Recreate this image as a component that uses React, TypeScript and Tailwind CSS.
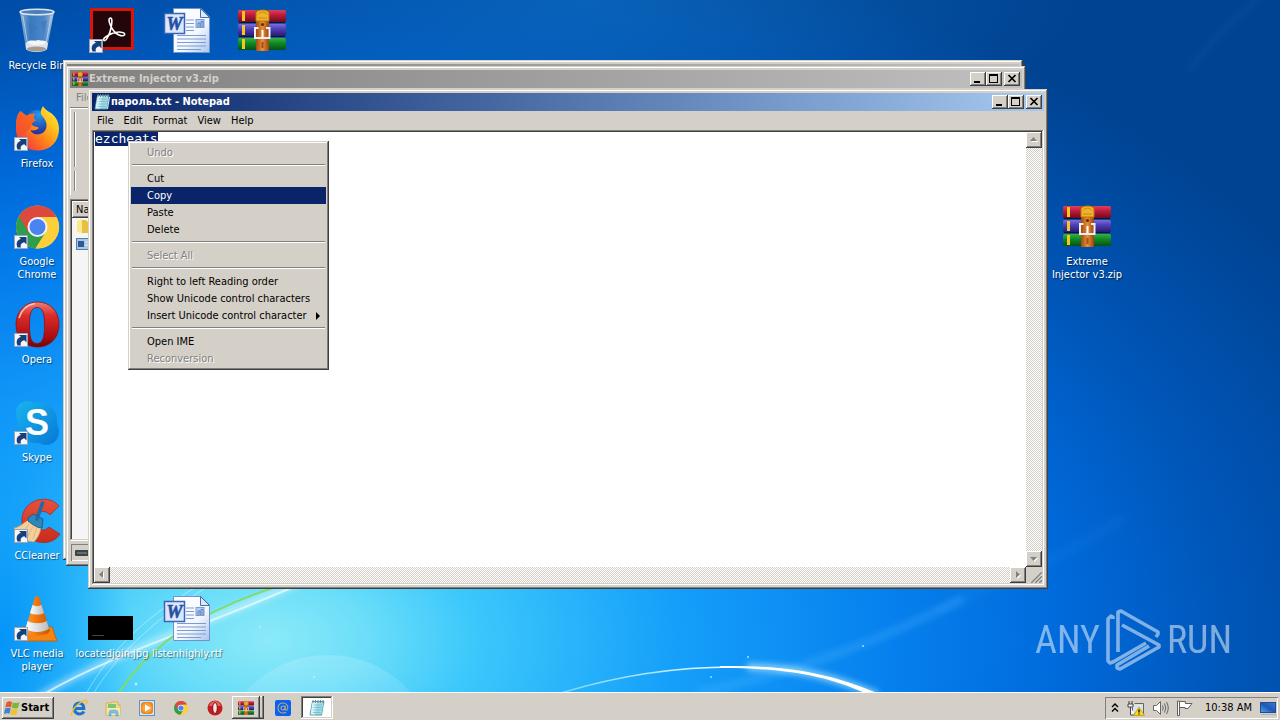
import React, { useEffect, useRef } from 'react'

const raised =
  'bg-[#d4d0c8] shadow-[inset_-1px_-1px_#404040,inset_1px_1px_#fff,inset_-2px_-2px_#808080]'
const sunken =
  'shadow-[inset_-1px_-1px_#fff,inset_1px_1px_#808080,inset_-2px_-2px_#d4d0c8,inset_2px_2px_#404040]'
const frame =
  'bg-[#d4d0c8] p-1 shadow-[inset_-1px_-1px_#404040,inset_1px_1px_#d4d0c8,inset_-2px_-2px_#808080,inset_2px_2px_#fff]'
const track = 'bg-[repeating-conic-gradient(#fff_0_25%,#d4d0c8_0_50%)] bg-[length:2px_2px]'

/* ---------- Wallpaper ---------- */

const Wallpaper = () => (
  <svg
    className="absolute inset-0 h-full w-full"
    viewBox="0 0 1280 692"
    preserveAspectRatio="none"
    aria-hidden="true"
  >
    <defs>
      <radialGradient id="glow" gradientUnits="userSpaceOnUse" cx="0" cy="0" r="1" gradientTransform="translate(270 640) scale(1200 740)">
        <stop offset="0" stopColor="#8ceaf8" />
        <stop offset="0.08" stopColor="#6cdef9" />
        <stop offset="0.17" stopColor="#3cc8fb" />
        <stop offset="0.34" stopColor="#159ffa" />
        <stop offset="0.52" stopColor="#0680ee" />
        <stop offset="0.66" stopColor="#006adb" />
        <stop offset="0.8" stopColor="#0056b8" />
        <stop offset="0.93" stopColor="#00499f" />
        <stop offset="1" stopColor="#004392" />
      </radialGradient>
      <radialGradient id="top" gradientUnits="userSpaceOnUse" cx="0" cy="0" r="1" gradientTransform="translate(600 0) scale(480 160)">
        <stop offset="0" stopColor="#1278cc" stopOpacity="0.5" />
        <stop offset="1" stopColor="#1278cc" stopOpacity="0" />
      </radialGradient>
      <radialGradient id="left" gradientUnits="userSpaceOnUse" cx="0" cy="0" r="1" gradientTransform="translate(0 640) scale(130 260)">
        <stop offset="0" stopColor="#0090f8" stopOpacity="0.9" />
        <stop offset="1" stopColor="#0090f8" stopOpacity="0" />
      </radialGradient>
      <linearGradient id="arc" gradientUnits="userSpaceOnUse" x1="561" y1="0" x2="875" y2="0">
        <stop offset="0" stopColor="#9fe4ff" stopOpacity="0.7" />
        <stop offset="0.6" stopColor="#fff" />
        <stop offset="1" stopColor="#fff" />
      </linearGradient>
      <linearGradient id="bubble" x1="0" x2="0" y1="0" y2="1">
        <stop offset="0" stopColor="#fff" stopOpacity="0.16" />
        <stop offset="0.35" stopColor="#fff" stopOpacity="0.04" />
      </linearGradient>
      <filter id="soft" x="-20%" y="-50%" width="140%" height="200%">
        <feGaussianBlur stdDeviation="3" />
      </filter>
    </defs>
    <rect width="1280" height="692" fill="url(#glow)" />
    <rect width="1280" height="200" fill="url(#top)" />
    <rect y="380" width="130" height="312" fill="url(#left)" />
    <circle cx="328" cy="765" r="110" fill="url(#bubble)" />
    <g fill="none" strokeLinecap="round">
      <path d="M40 696C110 655 200 625 300 582" stroke="#fff" strokeOpacity="0.45" strokeWidth="7" filter="url(#soft)" />
      <path d="M44 694C110 655 200 628 300 584" stroke="#e8fbff" strokeOpacity="0.75" strokeWidth="2" />
      <path d="M86 694C110 650 150 612 205 582" stroke="#fff" strokeOpacity="0.4" />
      <path d="M93 694C120 650 160 615 215 582" stroke="#fff" strokeOpacity="0.4" />
      <path d="M118 694C150 645 200 610 285 584" stroke="#7fdc6a" strokeWidth="2" />
      <path d="M700 692C800 672 880 640 960 600" stroke="#5cc0ff" strokeOpacity="0.25" strokeWidth="8" filter="url(#soft)" />
      <path d="M940 610C1000 580 1060 560 1120 520" stroke="#5cc0ff" strokeOpacity="0.06" strokeWidth="12" filter="url(#soft)" />
      <path d="M1190 70C1210 40 1240 15 1262 -5" stroke="#5cc0ff" strokeOpacity="0.15" strokeWidth="2" filter="url(#soft)" />
      <path d="M750 667C800 668 835 678 875 694" stroke="#bff0ff" strokeOpacity="0.7" strokeWidth="7" filter="url(#soft)" />
      <path d="M561 693C620 675 680 667 733 667" stroke="url(#arc)" strokeWidth="1.5" />
    </g>
    <path d="M720 666C790 665 832 674 879 694H867C830 677 790 668 720 668Z" fill="#fff" />
    <g fill="#c8f4ff" fillOpacity="0.8">
      <circle cx="136" cy="684" r="1.5" />
      <circle cx="260" cy="627" r="1" />
      <circle cx="748" cy="657" r="1" />
      <circle cx="863" cy="646" r="1" />
      <circle cx="314" cy="677" r="1" />
      <circle cx="711" cy="677" r="1" />
    </g>
  </svg>
)

/* ---------- Desktop icons (48px) ---------- */

const Shortcut = () => (
  <g>
    <rect x="1.5" y="33.5" width="13" height="13" fill="#f4f6fa" stroke="#9aa4b4" />
    <path d="M4.500 45.500C2.500 41 4.500 37.500 8 37L6 35H13.500V42.500L11.300 40.200C8.500 41 7 42.500 8 45.500Z" fill="#163f7c" />
  </g>
)

const RecycleBin = () => (
  <svg viewBox="0 0 48 48" className="h-12 w-12">
    <defs>
      <linearGradient id="bin" x1="0" x2="1">
        <stop offset="0" stopColor="#b4c9de" stopOpacity="0.85" />
        <stop offset="0.3" stopColor="#5f93cc" stopOpacity="0.6" />
        <stop offset="0.7" stopColor="#7fa9d6" stopOpacity="0.6" />
        <stop offset="1" stopColor="#c3d4e4" stopOpacity="0.9" />
      </linearGradient>
    </defs>
    <path d="M7 6L13 43C15 47 32 47 34 43L41 6Z" fill="url(#bin)" />
    <path d="M12.500 37C18 34 29 34 35 37L34 43C31 47 16 47 13 43Z" fill="#dde2e6" />
    <ellipse cx="23.500" cy="43" rx="9.500" ry="2.500" fill="#a59c92" />
    <path d="M14 36C18 33 22 36 25 34C29 35 32 34 34 36C30 40 18 41 14 36Z" fill="#f3f5f6" />
    <path d="M14 16L24 21L19 28ZM28 16L34 14L31 28Z" fill="#3a76bb" fillOpacity="0.6" />
    <ellipse cx="24" cy="6" rx="17" ry="2.800" fill="#4b7fb8" stroke="#dbe5ee" strokeWidth="1.500" />
    <path d="M10 10L15 41M38 10L32.500 41" stroke="#dfe9f2" strokeOpacity="0.6" />
  </svg>
)

const Acrobat = () => (
  <svg viewBox="0 0 48 48" className="h-12 w-12">
    <rect x="2" y="2" width="44" height="42" fill="#d9160c" />
    <rect x="5" y="5" width="38" height="36" fill="#22060a" />
    <path
      d="M22.500 12C19.500 12 21.500 19 25 24C28 28.500 34 31 36.500 29C38 26 30 25 24 27.500C19 29.500 14 33 16 34.500C18.500 35.500 22 27 23 22C24 17 24.500 12 22.500 12Z"
      fill="none"
      stroke="#fff"
      strokeWidth="1.600"
    />
    <Shortcut />
  </svg>
)

const WordDoc = () => (
  <svg viewBox="0 0 48 48" className="h-12 w-12">
    <defs>
      <linearGradient id="page" x1="0" x2="1" y1="0" y2="1">
        <stop offset="0" stopColor="#fff" />
        <stop offset="0.6" stopColor="#f4f8ff" />
        <stop offset="1" stopColor="#a9c2ec" />
      </linearGradient>
    </defs>
    <path d="M10.500 2.500H38L46.500 11V46.500H10.500Z" fill="url(#page)" stroke="#6f93cf" />
    <path d="M37.500 2.500V11.500H46.500Z" fill="#dce8fb" stroke="#4a6fb0" />
    <path d="M23 14H31M23 17.500H31M23 21H31M23 24.500H31M14 29.500H43M14 33H43M14 36.500H43M14 40H43M14 43.500H38" stroke="#7c9bd0" />
    <rect x="33" y="13.500" width="8" height="8" fill="#b5cdf2" stroke="#7c9bd0" />
    <path d="M35 21V17H37V21M38 21V15.500H40V21" stroke="#5a80c4" fill="none" />
    <rect x="1.500" y="7.500" width="20" height="20" fill="#dbe7fb" stroke="#3a64b4" strokeWidth="1.500" />
    <text x="11.500" y="24" textAnchor="middle" fontFamily="Liberation Serif, serif" fontStyle="italic" fontWeight="bold" fontSize="18" fill="#2450a4" stroke="#2450a4" strokeWidth="0.600">W</text>
  </svg>
)

const WinRar = ({ className = 'h-12 w-12' }: { className?: string }) => (
  <svg viewBox="0 0 48 48" className={className}>
    <defs>
      <linearGradient id="rarRed" x1="0" x2="0" y1="0" y2="1">
        <stop offset="0" stopColor="#e0405c" />
        <stop offset="0.4" stopColor="#c01c3c" />
        <stop offset="1" stopColor="#6c0c20" />
      </linearGradient>
      <linearGradient id="rarBlue" x1="0" x2="0" y1="0" y2="1">
        <stop offset="0" stopColor="#7c6ce0" />
        <stop offset="0.4" stopColor="#5040b8" />
        <stop offset="1" stopColor="#281c6c" />
      </linearGradient>
      <linearGradient id="rarGreen" x1="0" x2="0" y1="0" y2="1">
        <stop offset="0" stopColor="#38b048" />
        <stop offset="0.4" stopColor="#108c28" />
        <stop offset="1" stopColor="#085014" />
      </linearGradient>
      <linearGradient id="strap" x1="0" x2="1">
        <stop offset="0" stopColor="#a04c10" />
        <stop offset="0.5" stopColor="#e89038" />
        <stop offset="1" stopColor="#984410" />
      </linearGradient>
    </defs>
    <rect x="0" y="4" width="48" height="12" rx="1.500" fill="url(#rarRed)" />
    <rect x="0" y="18" width="48" height="12" rx="1.500" fill="url(#rarBlue)" />
    <rect x="0" y="32" width="48" height="12" rx="1.500" fill="url(#rarGreen)" />
    <path d="M4 5H7V15H4ZM4 19H7V29H4ZM4 33H7V43H4Z" fill="#f4c820" />
    <path d="M1 16.500H47M1 30.500H47" stroke="#20101c" />
    <rect x="18" y="4" width="13" height="41" fill="url(#strap)" />
    <path d="M18 15V7C18 3 31 3 31 7V15Z" fill="#f0b428" stroke="#b87410" />
    <path d="M20 8.500C22 5.500 27 5.500 29 8.500M20 12H29" stroke="#c88818" fill="none" />
    <circle cx="24.500" cy="18.500" r="1.500" fill="#602808" />
    <path d="M20.500 22H17V32H31.500V22H28" fill="none" stroke="#f0eef0" strokeWidth="2" />
    <path d="M24.500 24V31" stroke="#fff" strokeWidth="2" />
    <path d="M24.500 36V42" stroke="#a85014" strokeWidth="2" />
  </svg>
)

const Firefox = () => (
  <svg viewBox="0 0 48 48" className="h-12 w-12">
    <defs>
      <linearGradient id="fox" x1="1" x2="0.1" y1="0" y2="0.9">
        <stop offset="0" stopColor="#fff04a" />
        <stop offset="0.35" stopColor="#ffc01c" />
        <stop offset="0.65" stopColor="#ff7a1c" />
        <stop offset="1" stopColor="#f0304a" />
      </linearGradient>
      <radialGradient id="globe" cx="0.6" cy="0.2" r="0.8">
        <stop offset="0" stopColor="#1c9cf0" />
        <stop offset="1" stopColor="#2c2c98" />
      </radialGradient>
    </defs>
    <circle cx="23.500" cy="18" r="12" fill="url(#globe)" />
    <path
      d="M30 2C27 7 27 10 30 13C34 17 35 24 31 28C27 32 19 31 17.500 26C20 27 23 26.500 26 24C24 22 20 23 19 20.500C18.500 18.500 21 18 23 16C20 15.500 20 13 22 10C19 9.500 16 10 14 12C12 10 9 9 7.500 7C4 10 3 16 3 22C2 30 6 38 10 41C14 45 20 47 26 46.500C38 46 46 37 46 25C46 17 42 12 38 9C33 6 31 4 30 2Z"
      fill="url(#fox)"
    />
    <path d="M7.500 7C9 9 12 10 14 12C17 10 19 9.500 22 10C20 13 20 15.500 23 16C21 18 18.500 18.500 19 20.500C17 26 12 30 5 30C2 22 3 12 7.500 7Z" fill="#f4502c" fillOpacity="0.7" />
    <Shortcut />
  </svg>
)

const ChromeArt = () => (
  <g>
    <circle cx="24.500" cy="25" r="21.500" fill="#fdd03b" />
    <path d="M24.500 25L5.880 14.250A21.500 21.500 0 0 0 22.500 46.400L33 30Z" fill="#2f9e4c" />
    <path d="M24.500 15H43.600A21.500 21.500 0 0 0 5.880 14.250L15.800 31Z" fill="#dc4a3d" />
    <path d="M43.500 15A21.500 21.500 0 0 1 22.500 46.400L33 30V15Z" fill="#fdd03b" />
    <circle cx="24.500" cy="25" r="10" fill="#f4f4f4" />
    <circle cx="24.500" cy="25" r="8" fill="#4a84ee" />
  </g>
)

const Chrome = () => (
  <svg viewBox="0 0 48 48" className="h-12 w-12">
    <ChromeArt />
    <Shortcut />
  </svg>
)

const Opera = () => (
  <svg viewBox="0 0 48 48" className="h-12 w-12">
    <defs>
      <linearGradient id="opera" x1="0" x2="0" y1="0" y2="1">
        <stop offset="0" stopColor="#f08078" />
        <stop offset="0.3" stopColor="#dc2c28" />
        <stop offset="0.8" stopColor="#a80c10" />
        <stop offset="1" stopColor="#700408" />
      </linearGradient>
    </defs>
    <path
      fillRule="evenodd"
      d="M24.500 2C37 2 46 11 46 24.500C46 38 37 47 24.500 47C12 47 3 38 3 24.500C3 11 12 2 24.500 2ZM24 7.500C18 7.500 16.500 14 16.500 25.500C16.500 37 18 43.500 24 43.500C30 43.500 31.500 37 31.500 25.500C31.500 14 30 7.500 24 7.500Z"
      fill="url(#opera)"
      stroke="#8c1014"
      strokeWidth="0.800"
    />
    <path d="M6 18C9 9 15 4.500 22 3.500" stroke="#fbc4be" strokeWidth="1.500" fill="none" />
    <Shortcut />
  </svg>
)

const Skype = () => (
  <svg viewBox="0 0 48 48" className="h-12 w-12 overflow-visible">
    <defs>
      <linearGradient id="skype" x1="0" x2="1" y1="0" y2="1">
        <stop offset="0" stopColor="#18b4f0" />
        <stop offset="1" stopColor="#0878d4" />
      </linearGradient>
    </defs>
    <path
      d="M14 3C18 3 20 4.500 22 5C36 3 45.500 13 44 26C45 28 46 30.500 46 34C46 41 40 47 33 47C30 47 28 46 26 45C13 46 4 37 5 24C4 22 3 18 3 14C3 8 8 3 14 3Z"
      fill="url(#skype)"
    />
    <text x="24" y="37" textAnchor="middle" fontFamily="Liberation Sans, sans-serif" fontWeight="bold" fontSize="36" fill="#fff">S</text>
    <Shortcut />
  </svg>
)

const CCleaner = () => (
  <svg viewBox="0 0 48 48" className="h-12 w-12">
    <defs>
      <linearGradient id="cc" x1="0" x2="0" y1="0" y2="1">
        <stop offset="0" stopColor="#e8503c" />
        <stop offset="1" stopColor="#c82c1c" />
      </linearGradient>
    </defs>
    <path
      d="M46 10C41 4 33 2 25 4C14 7 8 16 9 27C10 38 18 46 29 46.500C37 47 43 44 47 38L36 31C33 34 30 35 27 33C23 31 21 27 22 22C23 17 28 15 31 15.500C34 16 35 17 37 19Z"
      fill="url(#cc)"
      stroke="#a8241a"
      strokeWidth="0.700"
    />
    <path d="M17 23C10 27 7 31 1 32C3 40 10 45 21 46C25 42 27 37 28 32Z" fill="#f2cf9c" stroke="#c89a5c" strokeWidth="0.700" />
    <path d="M16 28L9 38M20 30L14 42M24 31L20 43" stroke="#e0b880" />
    <path d="M15 22L20 18L30 23L29 32C24 32 19 28 15 25Z" fill="#2f86b8" stroke="#1c5f8c" />
    <path d="M24 23L29.500 7" stroke="#1c6ca8" strokeWidth="3.500" strokeLinecap="round" />
    <Shortcut />
  </svg>
)

const Vlc = () => (
  <svg viewBox="0 0 48 48" className="h-12 w-12">
    <defs>
      <linearGradient id="cone" x1="0" x2="1">
        <stop offset="0" stopColor="#f8a040" />
        <stop offset="0.4" stopColor="#f47c10" />
        <stop offset="1" stopColor="#cc5400" />
      </linearGradient>
      <linearGradient id="band" x1="0" x2="1">
        <stop offset="0" stopColor="#fff" />
        <stop offset="1" stopColor="#b8bcc0" />
      </linearGradient>
    </defs>
    <path d="M8 33H39L44 47H10Z" fill="#f48414" stroke="#d06000" />
    <path d="M22 3C23 1.500 25 1.500 26 3L37 37C34 43 16 43 12 37Z" fill="url(#cone)" />
    <path d="M19.500 11C22 12.500 26 12.500 28.500 11L31 19C27 21 21 21 17 19Z" fill="url(#band)" />
    <path d="M14.600 27C20 30 29 30 33.700 27L36 34.500C31 39 17 39 12.600 34.500Z" fill="url(#band)" />
    <Shortcut />
  </svg>
)

const JpgThumb = () => (
  <span className="flex h-12 w-12 items-end justify-start pb-0.5">
    <span className="flex h-6 w-[45px] items-end bg-black pb-1 pl-1">
      <span className="h-px w-3 bg-[#444]" />
    </span>
  </span>
)

const desktopIcons = [
  { label: 'Recycle Bin', icon: <RecycleBin />, cell: 'col-start-1 row-start-1' },
  { label: '', name: 'Acrobat Reader', icon: <Acrobat />, cell: 'col-start-2 row-start-1' },
  { label: '', name: 'Document', icon: <WordDoc />, cell: 'col-start-3 row-start-1' },
  { label: '', name: 'Archive', icon: <WinRar />, cell: 'col-start-4 row-start-1' },
  { label: 'Firefox', icon: <Firefox />, cell: 'col-start-1 row-start-2' },
  { label: 'Google\nChrome', icon: <Chrome />, cell: 'col-start-1 row-start-3' },
  { label: 'Opera', icon: <Opera />, cell: 'col-start-1 row-start-4' },
  { label: 'Skype', icon: <Skype />, cell: 'col-start-1 row-start-5' },
  { label: 'CCleaner', icon: <CCleaner />, cell: 'col-start-1 row-start-6' },
  { label: 'VLC media\nplayer', icon: <Vlc />, cell: 'col-start-1 row-start-7' },
  { label: 'locatedjoin.jpg', icon: <JpgThumb />, cell: 'col-start-2 row-start-7' },
  { label: 'listenhighly.rtf', icon: <WordDoc />, cell: 'col-start-3 row-start-7' },
  { label: 'Extreme\nInjector v3.zip', icon: <WinRar />, cell: 'col-start-15 row-start-3' },
]

const DesktopIcons = () => (
  <div className="relative grid auto-cols-[75px] auto-rows-[98px]">
    {desktopIcons.map((item) => (
      <button
        key={item.cell}
        type="button"
        aria-label={item.name}
        className={`flex w-[74px] flex-col items-center gap-[5px] pt-1.5 ${item.cell}`}
      >
        {item.icon}
        <span className="whitespace-pre text-center leading-[13px] text-white [text-shadow:1px_1px_1px_#0008]">
          {item.label}
        </span>
      </button>
    ))}
  </div>
)

/* ---------- Windows ---------- */

const NotepadIcon = () => (
  <svg viewBox="0 0 16 16" className="h-4 w-4">
    <path d="M3.500 1.500H15L13 15H1Z" fill="#9fdbe4" stroke="#4e97a6" />
    <path d="M3.500 2L1.500 14.500H6L8 2Z" fill="#d5f3f6" />
    <path d="M5 5H13M4.700 7.500H12.600M4.300 10H12.300M4 12.500H11.800" stroke="#6dbac8" strokeWidth="0.800" />
    <path d="M4 0V3M6.500 0V3M9 0V3M11.500 0V3M14 0V3" stroke="#708890" />
    <path d="M13.500 15L15.500 3" stroke="#f2f4ec" />
  </svg>
)

const WindowButtons = () => (
  <div className="flex">
    <button type="button" aria-label="Minimize" className={`h-3.5 w-4 ${raised}`}>
      <svg viewBox="0 0 16 14" className="h-3.5 w-4">
        <rect x="4" y="9" width="6" height="2" />
      </svg>
    </button>
    <button type="button" aria-label="Maximize" className={`h-3.5 w-4 ${raised}`}>
      <svg viewBox="0 0 16 14" className="h-3.5 w-4">
        <path fillRule="evenodd" d="M3 2H12V11H3ZM4 4V10H11V4Z" />
      </svg>
    </button>
    <button type="button" aria-label="Close" className={`ml-0.5 h-3.5 w-4 ${raised}`}>
      <svg viewBox="0 0 16 14" className="h-3.5 w-4">
        <path d="M4.500 3L11.500 10M11.500 3L4.500 10" stroke="#000" strokeWidth="1.700" />
      </svg>
    </button>
  </div>
)

type WindowProps = {
  title: string
  icon: React.ReactNode
  active?: boolean
  place: string
  children?: React.ReactNode
}

const Window = ({ title, icon, active, place, children }: WindowProps) => (
  <section className={`absolute flex h-[500px] w-3/4 flex-col ${frame} ${place}`}>
    <header
      className={
        active
          ? 'flex h-[18px] items-center bg-linear-to-r from-[#0a246a] to-[#a6caf0] px-0.5 text-white'
          : 'flex h-[18px] items-center bg-linear-to-r from-[#808080] to-[#c0c0c0] px-0.5 text-[#d4d0c8]'
      }
    >
      {icon}
      <h2 className="flex-1 pl-px leading-4 font-bold">{title}</h2>
      <WindowButtons />
    </header>
    {children}
  </section>
)

const ArchiveWindow = () => (
  <Window title="Extreme Injector v3.zip" icon={<WinRar className="h-4 w-4" />} place="top-[66px] left-[66px]">
    <nav className="flex h-[19px] items-center px-1.5 text-[#808080]">
      <button type="button">File</button>
    </nav>
    <div className="flex h-[88px] flex-col gap-1 border-t border-[#808080] bg-[#d4d0c8] py-1 pl-1 shadow-[inset_1px_1px_#fff]">
      <div className="h-14 w-0.5 border-r border-l border-r-white border-l-[#808080]" />
      <div className="h-5 w-0.5 border-r border-l border-r-white border-l-[#808080]" />
    </div>
    <div className={`mt-1 flex-1 bg-[#f5f5f5] p-0.5 ${sunken}`}>
      <div className={`h-[17px] pl-1 leading-[17px] ${raised}`}>Na</div>
      <svg viewBox="0 0 16 34" className="ml-1 h-[34px] w-4">
        <path d="M1 3L6 1V15L1 14Z" fill="#fbe88c" />
        <path d="M6 2H10L12 4H16V15H6Z" fill="#e8c040" />
        <rect x="0.500" y="20.500" width="15" height="11" fill="#a8c8e4" stroke="#5a7ca4" />
        <rect x="2" y="23" width="6" height="6" fill="#2a5c94" />
        <path d="M9 24H14M9 27H14" stroke="#e8f0f8" />
      </svg>
    </div>
    <div className="mt-0.5 h-[19px] p-px">
      <div className="flex h-full items-center pl-1 shadow-[inset_1px_1px_#808080,inset_-1px_-1px_#fff]">
        <svg viewBox="0 0 18 6" className="h-1.5 w-[18px]">
          <rect width="18" height="6" rx="1" fill="#3c4448" />
          <path d="M2 3H12" stroke="#8c989c" />
        </svg>
      </div>
    </div>
  </Window>
)

const menus = ['File', 'Edit', 'Format', 'View', 'Help']

const ScrollButton = ({ label, points }: { label: string; points: string }) => (
  <button type="button" aria-label={label} className={`h-4 w-4 ${raised}`}>
    <svg viewBox="0 0 16 16" className="h-4 w-4">
      <polygon points={points} transform="translate(1 1)" fill="#fff" />
      <polygon points={points} fill="#808080" />
    </svg>
  </button>
)

const NotepadWindow = () => {
  const text = useRef<HTMLTextAreaElement>(null)

  useEffect(() => {
    text.current?.focus()
    text.current?.select()
  }, [])

  return (
    <Window title="пароль.txt - Notepad" icon={<NotepadIcon />} active place="top-[89px] left-[88px]">
      <nav className="flex h-[19px] items-center">
        {menus.map((menu) => (
          <button key={menu} type="button" className="px-[5px]">
            {menu}
          </button>
        ))}
      </nav>
      <div className={`grid flex-1 grid-cols-[1fr_16px] grid-rows-[1fr_16px] bg-white p-0.5 ${sunken}`}>
        <textarea
          ref={text}
          aria-label="Text"
          defaultValue="ezcheats"
          spellCheck={false}
          className="resize-none overflow-hidden bg-white pl-px font-['DejaVu_Sans_Mono',monospace] text-[13px] leading-[13px] outline-none selection:bg-[#0a246a] selection:text-white"
        />
        <div className={`flex flex-col justify-between ${track}`}>
          <ScrollButton label="Scroll up" points="4,9 11,9 7.5,5" />
          <ScrollButton label="Scroll down" points="4,6 11,6 7.5,10" />
        </div>
        <div className={`flex justify-between ${track}`}>
          <ScrollButton label="Scroll left" points="9,4 9,11 5,7.5" />
          <ScrollButton label="Scroll right" points="6,4 6,11 10,7.5" />
        </div>
        <svg viewBox="0 0 16 16" className="h-4 w-4 bg-[#d4d0c8]">
          <path d="M4 16L16 4M8 16L16 8M12 16L16 12" stroke="#fff" />
          <path d="M5 16L16 5M9 16L16 9M13 16L16 13" stroke="#808080" strokeWidth="1.500" />
        </svg>
      </div>
    </Window>
  )
}

/* ---------- Context menu ---------- */

const menuGroups = [
  [{ label: 'Undo', disabled: true }],
  [{ label: 'Cut' }, { label: 'Copy', selected: true }, { label: 'Paste' }, { label: 'Delete' }],
  [{ label: 'Select All', disabled: true }],
  [
    { label: 'Right to left Reading order' },
    { label: 'Show Unicode control characters' },
    { label: 'Insert Unicode control character', submenu: true },
  ],
  [{ label: 'Open IME' }, { label: 'Reconversion', disabled: true }],
] as { label: string; disabled?: boolean; selected?: boolean; submenu?: boolean }[][]

const ContextMenu = () => (
  <div
    role="menu"
    className="absolute top-[141px] left-[128px] w-[201px] bg-[#d4d0c8] p-[3px] shadow-[inset_-1px_-1px_#404040,inset_1px_1px_#d4d0c8,inset_-2px_-2px_#808080,inset_2px_2px_#fff]"
  >
    {menuGroups.map((group, index) => (
      <div key={index}>
        {index > 0 && <hr className="mx-px mt-[3px] mb-1 h-0.5 border-t border-b border-t-[#808080] border-b-white" />}
        {group.map((item) => (
          <button
            key={item.label}
            type="button"
            role="menuitem"
            disabled={item.disabled}
            className={`flex h-[17px] w-full items-center pr-1.5 pl-4 text-left whitespace-nowrap ${
              item.disabled ? 'text-[#808080] [text-shadow:1px_1px_#fff]' : ''
            } ${item.selected ? 'bg-[#0a246a] text-white' : ''}`}
          >
            <span className="flex-1">{item.label}</span>
            {item.submenu && (
              <svg viewBox="0 0 4 8" className="h-2 w-1">
                <path d="M0 0L4 4L0 8Z" />
              </svg>
            )}
          </button>
        ))}
      </div>
    ))}
  </div>
)

/* ---------- Watermark ---------- */

const Watermark = () => (
  <div className="absolute right-12 bottom-5 flex h-16 items-center gap-1.5 font-['Roboto_Condensed','Roboto',sans-serif] text-[38px] leading-none text-white opacity-50">
    <span>ANY</span>
    <svg viewBox="0 0 55 62" className="h-[62px] w-[55px]" fill="none" stroke="#fff" strokeWidth="3.600" strokeLinejoin="round">
      <path d="M7 10V8L5 7L2 10V52L4 54L7 53L40 34" />
      <path d="M12 43V3L15 2L52 23V25L50 28" />
      <path d="M16 16L53 36V38L14 60L11 59V56L43 37" />
    </svg>
    <span>RUN</span>
  </div>
)

/* ---------- Taskbar ---------- */

const quickLaunch = [
  {
    name: 'Internet Explorer',
    icon: (
      <svg viewBox="0 0 18 18" className="h-[18px] w-[18px]">
        <path d="M14 12.500C12.500 15 9 15.800 6.500 14C3.500 12 3.500 6.500 7 4.500C10 3 14 5 13.800 9.500H5.500" fill="none" stroke="#1c74cc" strokeWidth="3" />
        <path d="M2 17C0 15 4 8 9 4.500C13 1.500 17 0 17 2.500C17 3.500 16.500 4.500 16 5" fill="none" stroke="#f0c030" strokeWidth="1.500" />
      </svg>
    ),
  },
  {
    name: 'Explorer',
    icon: (
      <svg viewBox="0 0 18 18" className="h-[18px] w-[18px]">
        <path d="M2 4H7L8 3H14V6H16V16H2Z" fill="#f4dc84" stroke="#c8a44c" strokeWidth="0.700" />
        <path d="M4 5H12V9H4Z" fill="#7cc47c" />
        <path d="M3 9H16V16H3Z" fill="#f8e8a4" />
        <path d="M5 17V13Q5 11 9.500 11Q14 11 14 13V17H12V14H7V17Z" fill="#7cc4ec" stroke="#4c94c4" strokeWidth="0.500" />
      </svg>
    ),
  },
  {
    name: 'Media Player',
    icon: (
      <svg viewBox="0 0 18 18" className="h-[18px] w-[18px]">
        <rect x="1.500" y="1.500" width="15" height="15" fill="#d4e6f8" stroke="#5c94cc" />
        <rect x="3" y="3" width="12" height="12" rx="3" fill="#f08418" />
        <circle cx="9" cy="9" r="5" fill="#fca03c" />
        <path d="M7 5.500L13 9L7 12.500Z" fill="#fff" />
      </svg>
    ),
  },
  {
    name: 'Google Chrome',
    icon: (
      <svg viewBox="3 3.500 43 43" className="h-3.5 w-3.5">
        <ChromeArt />
      </svg>
    ),
  },
  {
    name: 'Opera',
    icon: (
      <svg viewBox="0 0 16 16" className="h-4 w-4">
        <circle cx="8" cy="8" r="7.500" fill="#c41c20" />
        <path d="M2 6C3 2.500 6 1 8 1C10 1 13 2.500 14 6Z" fill="#e8605c" />
        <ellipse cx="8" cy="8" rx="2.300" ry="5.500" fill="#f6e8e6" stroke="#801014" />
      </svg>
    ),
  },
]

const Taskbar = () => (
  <footer className="relative flex h-7 items-center justify-between border-t border-white bg-[#d4d0c8] px-0.5 pt-0.5">
    <div className="flex items-center">
      <button type="button" className={`flex h-[22px] w-[52px] items-center gap-px pl-0.5 font-bold ${raised}`}>
        <svg viewBox="0 0 16 16" className="h-4 w-4 shrink-0">
          <path d="M2.500 2.500Q5 0.500 8 2L7 7.500Q4 6 1.200 8Z" fill="#e8582c" />
          <path d="M8.800 2.300Q12 4 15.500 2L14 8Q11 9 7.800 7.800Z" fill="#78b83c" />
          <path d="M1 8.800Q4 7 6.800 8.300L5.500 13.800Q3 12.500 0 14Z" fill="#3c84d4" />
          <path d="M7.600 8.700Q11 10 13.800 8.800L12.500 14.500Q9.500 16 6.300 14.300Z" fill="#f4c02c" />
        </svg>
        Start
      </button>
      <nav className="ml-2 flex items-center">
        {quickLaunch.map((app) => (
          <button key={app.name} type="button" aria-label={app.name} className="flex h-[22px] w-[34px] items-center justify-center">
            {app.icon}
          </button>
        ))}
        <button type="button" aria-label="WinRAR" className={`flex h-[23px] w-[28px] items-center justify-center ${raised}`}>
          <WinRar className="h-4 w-4" />
        </button>
        <span className="h-[23px] w-1 shadow-[inset_-1px_-1px_#404040,inset_-2px_-2px_#808080,inset_0_1px_#fff]" />
        <button type="button" aria-label="Mail" className="flex h-[22px] w-[37px] items-center justify-center">
          <svg viewBox="0 0 16 16" className="h-4 w-4">
            <rect width="16" height="16" rx="2" fill="#0c60f0" />
            <circle cx="8" cy="8" r="2" fill="none" stroke="#b4a878" strokeWidth="1.200" />
            <path d="M10.200 5.500V9Q10.500 10.500 12 10Q13.500 8 12.500 5.500Q10.500 2.500 7 3Q3 4 3 8Q3.200 12 7 13Q9.500 13.300 11 12.300" fill="none" stroke="#b4a878" strokeWidth="1.100" />
          </svg>
        </button>
        <button type="button" aria-label="Notepad" className={`flex h-[23px] w-8 items-center justify-center bg-white ${sunken}`}>
          <NotepadIcon />
        </button>
      </nav>
    </div>
    <div className="flex h-[22px] items-center shadow-[inset_1px_1px_#808080,inset_-1px_-1px_#fff]">
      <button type="button" aria-label="Show hidden icons" className="flex w-[20px] justify-center">
        <svg viewBox="0 0 8 10" className="h-2.5 w-2" fill="none" stroke="#000" strokeWidth="1.400">
          <path d="M1 4L4 1L7 4M1 8.500L4 5.500L7 8.500" />
        </svg>
      </button>
      <div className="flex items-center gap-2 pl-0.5">
        <svg viewBox="0 0 18 16" className="h-4 w-[18px]">
          <path d="M7.500 3.500H16.500V13.500H5.500V8" fill="#dce4ea" stroke="#606468" />
          <path d="M2 1V4M5 1V4M1 4H6V7H1ZM3.500 7V15H8" fill="#f8f8f8" stroke="#404448" />
          <path d="M12 7L17.500 15.500H6.500Z" fill="#f8d820" stroke="#b89408" strokeWidth="0.700" />
          <path d="M12 9.500V12.500M12 13.500V14.500" stroke="#000" strokeWidth="1.300" />
        </svg>
        <svg viewBox="0 0 16 16" className="h-4 w-4" fill="none" stroke="#686868">
          <path d="M0.500 5.500H3.500L7.500 1.500V14.500L3.500 10.500H0.500Z" fill="#fff" />
          <path d="M9.500 5.500Q11 8 9.500 10.500M11.500 3.500Q14 8 11.500 12.500M13.500 2Q17 8 13.500 14" />
        </svg>
        <svg viewBox="0 0 16 16" className="h-4 w-4" fill="#fff" stroke="#606060">
          <path d="M0.500 1V15.500H2.500V1Z" />
          <path d="M2.500 1.500H8.500V3.500H15L13 6L11 8.500H8V7.500H2.500Z" />
        </svg>
      </div>
      <time className="pr-2 pl-3">10:38 AM</time>
      <svg viewBox="0 0 16 14" className="mr-0.5 h-3.5 w-4">
        <defs>
          <linearGradient id="screen" x1="0" x2="1" y1="1" y2="0">
            <stop offset="0" stopColor="#5aa4f0" />
            <stop offset="0.5" stopColor="#1c58b8" />
            <stop offset="1" stopColor="#3c7cd4" />
          </linearGradient>
        </defs>
        <rect x="0.500" y="1.500" width="15" height="10" fill="url(#screen)" stroke="#244c8c" />
        <path d="M1 13.500H16" stroke="#a4b4c8" />
      </svg>
    </div>
  </footer>
)

export default function App() {
  return (
    <main className="flex min-h-screen flex-col overflow-hidden font-['Tahoma','DejaVu_Sans_Condensed',sans-serif] text-[11px] leading-[13px] text-black">
      <div className="relative flex-1">
        <Wallpaper />
        <DesktopIcons />
        <Window title="" icon={<WinRar className="h-4 w-4" />} place="top-[60px] left-[63px]" />
        <ArchiveWindow />
        <NotepadWindow />
        <ContextMenu />
        <Watermark />
      </div>
      <Taskbar />
    </main>
  )
}
